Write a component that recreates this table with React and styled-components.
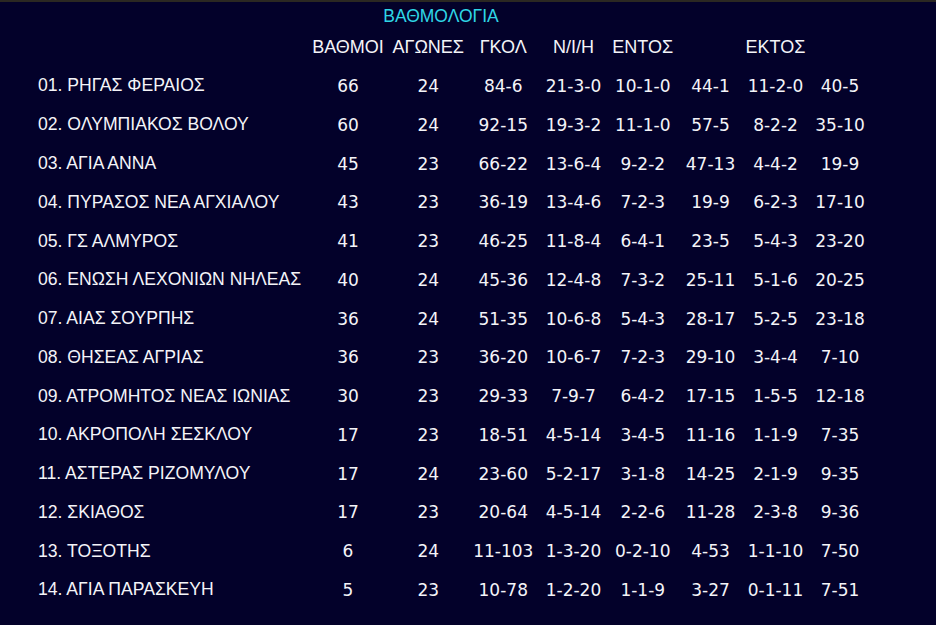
import React from "react";
import styled, { createGlobalStyle } from "styled-components";

const Global = createGlobalStyle`
  html, body { margin: 0; padding: 0; background: #03012a; }
  body { font-family: "Liberation Sans", Arial, sans-serif; }
`;

const Page = styled.div`
  width: 936px;
  height: 625px;
  background: #03012a;
  color: #f4f4f8;
  overflow: hidden;
`;

const TopBar = styled.div`
  height: 2px;
  background: #2b2822;
`;

const Title = styled.div`
  width: 882px;
  height: 27px;
  line-height: 28px;
  text-align: center;
  color: #2fd6e6;
  font-size: 17.5px;
`;

const Table = styled.div`
  padding-left: 38px;
  display: flex;
  flex-direction: column;
`;

const Row = styled.div`
  display: grid;
  grid-template-columns: 269px 82px 78.5px 71.5px 69px 69.5px 66px 64px 65px;
  height: ${(p) => p.$h}px;
  align-items: center;
  font-size: 17.6px;
`;

const Cell = styled.div`
  text-align: center;
  white-space: nowrap;
`;

const NameCell = styled(Cell)`
  text-align: left;
`;

const HeadCell = styled(Cell)`
  font-size: 18px;
`;

const NumCell = styled(Cell)`
  font-family: "DejaVu Sans", "Liberation Sans", sans-serif;
  font-size: 17px;
`;

const headers = ["", "ΒΑΘΜΟΙ", "ΑΓΩΝΕΣ", "ΓΚΟΛ", "Ν/Ι/Η", "ΕΝΤΟΣ", "", "ΕΚΤΟΣ", ""];

const data = [
  ["01. ΡΗΓΑΣ ΦΕΡΑΙΟΣ", "66", "24", "84-6", "21-3-0", "10-1-0", "44-1", "11-2-0", "40-5"],
  ["02. ΟΛΥΜΠΙΑΚΟΣ ΒΟΛΟΥ", "60", "24", "92-15", "19-3-2", "11-1-0", "57-5", "8-2-2", "35-10"],
  ["03. ΑΓΙΑ ΑΝΝΑ", "45", "23", "66-22", "13-6-4", "9-2-2", "47-13", "4-4-2", "19-9"],
  ["04. ΠΥΡΑΣΟΣ ΝΕΑ ΑΓΧΙΑΛΟΥ", "43", "23", "36-19", "13-4-6", "7-2-3", "19-9", "6-2-3", "17-10"],
  ["05. ΓΣ ΑΛΜΥΡΟΣ", "41", "23", "46-25", "11-8-4", "6-4-1", "23-5", "5-4-3", "23-20"],
  ["06. ΕΝΩΣΗ ΛΕΧΟΝΙΩΝ ΝΗΛΕΑΣ", "40", "24", "45-36", "12-4-8", "7-3-2", "25-11", "5-1-6", "20-25"],
  ["07. ΑΙΑΣ ΣΟΥΡΠΗΣ", "36", "24", "51-35", "10-6-8", "5-4-3", "28-17", "5-2-5", "23-18"],
  ["08. ΘΗΣΕΑΣ ΑΓΡΙΑΣ", "36", "23", "36-20", "10-6-7", "7-2-3", "29-10", "3-4-4", "7-10"],
  ["09. ΑΤΡΟΜΗΤΟΣ ΝΕΑΣ ΙΩΝΙΑΣ", "30", "23", "29-33", "7-9-7", "6-4-2", "17-15", "1-5-5", "12-18"],
  ["10. ΑΚΡΟΠΟΛΗ ΣΕΣΚΛΟΥ", "17", "23", "18-51", "4-5-14", "3-4-5", "11-16", "1-1-9", "7-35"],
  ["11. ΑΣΤΕΡΑΣ ΡΙΖΟΜΥΛΟΥ", "17", "24", "23-60", "5-2-17", "3-1-8", "14-25", "2-1-9", "9-35"],
  ["12. ΣΚΙΑΘΟΣ", "17", "23", "20-64", "4-5-14", "2-2-6", "11-28", "2-3-8", "9-36"],
  ["13. ΤΟΞΟΤΗΣ", "6", "24", "11-103", "1-3-20", "0-2-10", "4-53", "1-1-10", "7-50"],
  ["14. ΑΓΙΑ ΠΑΡΑΣΚΕΥΗ", "5", "23", "10-78", "1-2-20", "1-1-9", "3-27", "0-1-11", "7-51"],
];

export default function App() {
  return (
    <Page>
      <Global />
      <TopBar />
      <Title>ΒΑΘΜΟΛΟΓΙΑ</Title>
      <Table>
        <Row $h={37.6}>
          {headers.map((h, i) => (
            <HeadCell key={i}>{h}</HeadCell>
          ))}
        </Row>
        {data.map((r, ri) => (
          <Row key={ri} $h={38.77}>
            <NameCell>{r[0]}</NameCell>
            {r.slice(1).map((c, ci) => (
              <NumCell key={ci}>{c}</NumCell>
            ))}
          </Row>
        ))}
      </Table>
    </Page>
  );
}
